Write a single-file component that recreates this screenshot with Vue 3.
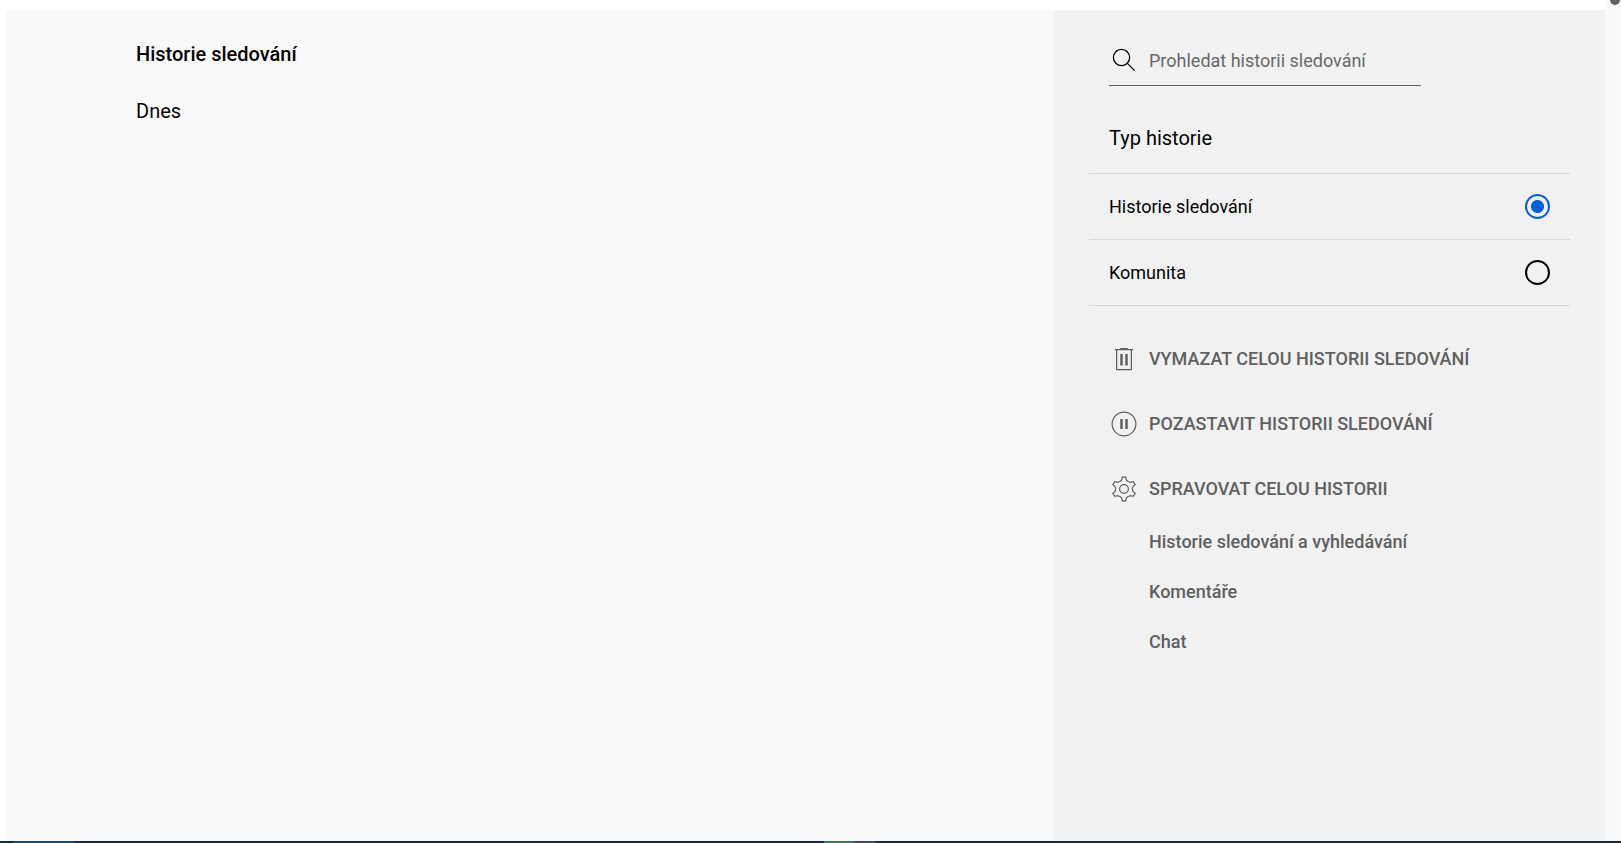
<template>
  <div class="screen">
    <div class="window">
      <div class="page">
        <!-- list of watched videos -->
        <main class="history">
          <h1>Historie sledování</h1>
          <h2>Dnes</h2>
        </main>

        <aside class="sidebar">
          <!-- search in history -->
          <form class="search" @submit.prevent>
            <button class="search-btn" type="submit" aria-label="Hledat">
              <svg class="icon" viewBox="0 0 24 24">
                <circle cx="10" cy="10" r="6.5" />
                <path d="M14.7 14.7L20.5 20.5" />
              </svg>
            </button>
            <input
              v-model="query"
              type="text"
              class="search-input"
              placeholder="Prohledat historii sledování"
              aria-label="Prohledat historii sledování"
            />
          </form>

          <!-- type of history -->
          <h2 class="type-title">Typ historie</h2>
          <div class="types">
            <label v-for="type in types" :key="type.id" class="type-row">
              <span>{{ type.label }}</span>
              <input v-model="selected" type="radio" name="type" :value="type.id" />
            </label>
          </div>

          <!-- actions -->
          <div class="actions">
            <button class="action" type="button">
              <svg class="icon" viewBox="0 0 24 24">
                <path d="M6.1 4.5V20.5H17.9V4.5M4.7 4.5H19.3M9 3.6H15" />
                <path class="bars" d="M10 8V17.2M14 8V17.2" />
              </svg>
              <span>Vymazat celou historii sledování</span>
            </button>
            <button class="action" type="button">
              <svg class="icon" viewBox="0 0 24 24">
                <circle cx="12" cy="12" r="9.5" />
                <path class="bars" d="M10 8V16M14 8V16" />
              </svg>
              <span>Pozastavit historii sledování</span>
            </button>
            <button class="action" type="button">
              <svg class="icon" viewBox="0 0 24 24">
                <circle cx="12" cy="12" r="3.5" />
                <path
                  d="M10.6 2.5H13.4L13.9 4.9Q15 6.3 17 6.6L19.4 6.1L20.9 8.5L19.1 10.1Q18.3 12 19.1 13.9L20.9 15.5L19.4 17.9L17 17.4Q15 17.7 13.9 19.1L13.4 21.5H10.6L10.1 19.1Q9 17.7 7 17.4L4.6 17.9L3.1 15.5L4.9 13.9Q5.7 12 4.9 10.1L3.1 8.5L4.6 6.1L7 6.6Q9 6.3 10.1 4.9Z"
                />
              </svg>
              <span>Spravovat celou historii</span>
            </button>
          </div>

          <nav class="links">
            <a v-for="link in links" :key="link" href="#">{{ link }}</a>
          </nav>
        </aside>
      </div>

      <!-- scrollbar -->
      <div class="scrollbar">
        <div class="thumb"></div>
      </div>
    </div>

    <!-- top edge of the taskbar -->
    <footer class="taskbar">
      <div class="active-app"></div>
      <div class="green-app"></div>
      <div class="gray-app"></div>
    </footer>
  </div>
</template>

<script setup>
import { ref } from 'vue'

const query = ref('')
const selected = ref('watch')

const types = [
  { id: 'watch', label: 'Historie sledování' },
  { id: 'community', label: 'Komunita' }
]

const links = ['Historie sledování a vyhledávání', 'Komentáře', 'Chat']
</script>

<style>
body {
  margin: 0;
  background: #fff;
}
</style>

<style scoped>
.screen {
  display: flex;
  flex-direction: column;
  min-height: 100vh;
  font-family: Roboto, 'Liberation Sans', sans-serif;
  font-size: 18px;
  line-height: 24px;
  color: #030303;
}

.window {
  display: flex;
  flex: 1;
}

.page {
  display: flex;
  flex: 1;
  padding: 10px 0 0 5px;
}

.history {
  flex: 1;
  padding: 32px 20px 0 131px;
  background: #f9f9f9;
}

h1,
h2 {
  margin: 0;
  font-size: 20px;
  line-height: 24px;
  font-weight: 400;
}

h1 {
  margin-bottom: 33px;
  font-weight: 500;
}

.sidebar {
  box-sizing: border-box;
  width: 551px;
  padding: 30px 35px;
  background: #f1f1f1;
}

.icon {
  display: block;
  flex: none;
  width: 30px;
  height: 30px;
  fill: none;
  stroke: currentColor;
  stroke-width: 1;
}

.bars {
  stroke-width: 2;
}

.search {
  display: flex;
  align-items: center;
  gap: 10px;
  width: 312px;
  height: 46px;
  box-sizing: border-box;
  margin-left: 20px;
  padding-bottom: 5px;
  border-bottom: 1px solid #606060;
}

.search-btn {
  padding: 0;
  border: none;
  background: none;
  color: #030303;
  cursor: pointer;
}

.search-input {
  flex: 1;
  min-width: 0;
  padding: 2px 0 0;
  border: none;
  outline: none;
  background: none;
  font: inherit;
  color: #030303;
}

.search-input::placeholder {
  color: #686868;
  opacity: 1;
}

.type-title {
  padding: 40px 20px 23px;
}

.types {
  border-top: 1px solid #d6d6d6;
}

.type-row {
  display: flex;
  align-items: center;
  justify-content: space-between;
  height: 65px;
  padding: 0 20px;
  border-bottom: 1px solid #d6d6d6;
  cursor: pointer;
}

.type-row input {
  appearance: none;
  width: 25px;
  height: 25px;
  margin: 0;
  border: 2px solid #030303;
  border-radius: 50%;
}

.type-row input:checked {
  border-color: #065fd4;
  background: radial-gradient(circle, #065fd4 6px, transparent 7px);
}

.actions {
  display: flex;
  flex-direction: column;
  align-items: flex-start;
  gap: 35px;
  padding: 38px 20px 0;
}

.action {
  display: flex;
  align-items: center;
  gap: 10px;
  padding: 0;
  border: none;
  background: none;
  font: inherit;
  font-weight: 500;
  text-transform: uppercase;
  color: #606060;
  cursor: pointer;
}

.links {
  display: flex;
  flex-direction: column;
  align-items: flex-start;
  gap: 26px;
  padding: 26px 20px 0 60px;
}

.links a {
  font-weight: 500;
  color: #606060;
  text-decoration: none;
}

.scrollbar {
  width: 16px;
  background: #f9f9f9;
}

.thumb {
  width: 10px;
  height: 5px;
  margin-left: 5px;
  border-radius: 0 0 5px 5px;
  background: #606060;
}

.taskbar {
  display: flex;
  height: 2px;
  background: #142c40;
}

.active-app {
  width: 61px;
  margin-left: 13px;
  background: #174a7c;
}

.green-app {
  width: 30px;
  margin-left: 750px;
  background: #3f7659;
}

.gray-app {
  width: 21px;
  background: #3a4a63;
}
</style>
